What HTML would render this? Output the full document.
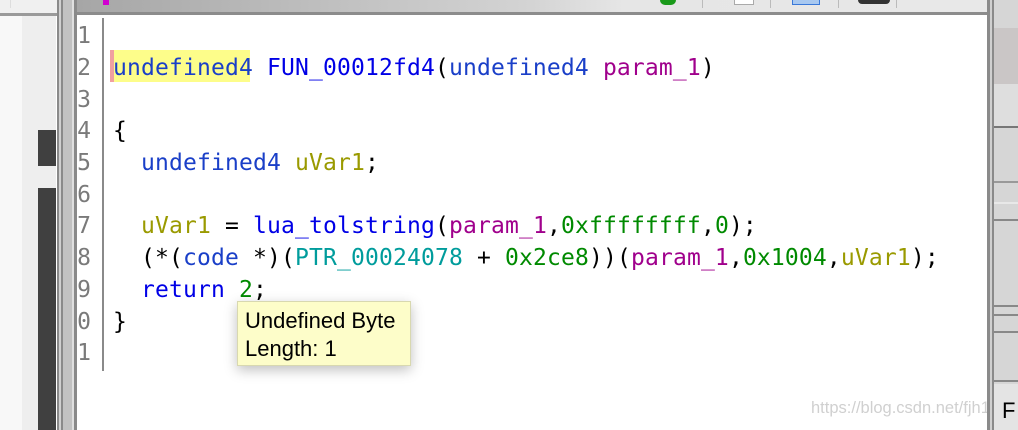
<!DOCTYPE html>
<html><head><meta charset="utf-8"><style>
*{margin:0;padding:0;box-sizing:border-box}
body{width:1018px;height:430px;overflow:hidden;background:#fff;position:relative;font-family:"DejaVu Sans Mono",monospace}
.a{position:absolute}
.code{position:absolute;left:113px;font-size:23px;letter-spacing:0.15px;white-space:pre;line-height:1;color:#000}
.ln{position:absolute;left:77px;font-size:23px;color:#7a7a7a;line-height:1;width:14px;overflow:hidden;direction:rtl;white-space:pre}
.t{color:#1a3fc8}.f{color:#0000e6}.p{color:#a0008c}.v{color:#9a9a00}.n{color:#008a00}.g{color:#009c9c}
</style></head><body>
<div class="a" style="left:0;top:0;width:57px;height:13px;background:#f0f0f0"></div>
<div class="a" style="left:10px;top:0;width:1px;height:8px;background:#ddd"></div>
<div class="a" style="left:0;top:13px;width:57px;height:3px;background:#9a9a9a"></div>
<div class="a" style="left:0;top:16px;width:22px;height:414px;background:#f8f8f8"></div>
<div class="a" style="left:22px;top:16px;width:34px;height:414px;background:#eeeeee"></div>
<div class="a" style="left:38px;top:130px;width:18px;height:36px;background:#404040"></div>
<div class="a" style="left:38px;top:188px;width:18px;height:242px;background:#404040"></div>
<div class="a" style="left:57px;top:0;width:2px;height:430px;background:#8a8a8a"></div>
<div class="a" style="left:59px;top:0;width:2px;height:430px;background:#d0d0d0"></div>
<div class="a" style="left:61px;top:0;width:2px;height:430px;background:#8a8a8a"></div>
<div class="a" style="left:63px;top:0;width:9px;height:430px;background:#c2c2c2"></div>
<div class="a" style="left:72px;top:0;width:2px;height:430px;background:#e0e0e0"></div>
<div class="a" style="left:74px;top:0;width:3px;height:430px;background:#8a8a8a"></div>
<div class="a" style="left:77px;top:0;width:911px;height:12px;background:linear-gradient(90deg,#a6a6a6,#d4d4d4 50%,#e6e6e6 60%,#e8e8e8)"></div>
<div class="a" style="left:77px;top:12px;width:911px;height:3px;background:#8c8c8c"></div>
<div class="a" style="left:103px;top:0;width:6px;height:5px;background:#d000d0"></div>
<div class="a" style="left:660px;top:0;width:16px;height:5px;border-radius:0 0 8px 8px;background:#1a9a1a"></div>
<div class="a" style="left:702px;top:0;width:1px;height:8px;background:#bbb"></div>
<div class="a" style="left:734px;top:0;width:20px;height:5px;background:#fff;border:1px solid #aaa;border-top:none"></div>
<div class="a" style="left:770px;top:0;width:1px;height:8px;background:#bbb"></div>
<div class="a" style="left:792px;top:0;width:28px;height:5px;background:#a8c8f0;border:1px solid #3a78d8;border-top:none"></div>
<div class="a" style="left:838px;top:0;width:1px;height:8px;background:#bbb"></div>
<div class="a" style="left:858px;top:0;width:32px;height:4px;border-radius:0 0 10px 10px;background:#333"></div>
<div class="a" style="left:896px;top:0;width:1px;height:8px;background:#bbb"></div>
<div class="a" style="left:102px;top:18px;width:2px;height:353px;background:#8a8a8a"></div>
<div class="ln" style="top:25px">1</div>
<div class="ln" style="top:57px">2</div>
<div class="ln" style="top:89px">3</div>
<div class="ln" style="top:120px">4</div>
<div class="ln" style="top:152px">5</div>
<div class="ln" style="top:184px">6</div>
<div class="ln" style="top:215px">7</div>
<div class="ln" style="top:247px">8</div>
<div class="ln" style="top:279px">9</div>
<div class="ln" style="top:311px">0</div>
<div class="ln" style="top:342px">1</div>
<div class="a" style="left:110px;top:50px;width:140px;height:32px;background:#fdfd8a"></div>
<div class="a" style="left:110px;top:50px;width:4px;height:32px;background:#f0a0a0"></div>
<div class="code" style="top:57px"><span class="t">undefined4</span> <span class="f">FUN_00012fd4</span>(<span class="t">undefined4</span> <span class="p">param_1</span>)</div>
<div class="code" style="top:120px">{</div>
<div class="code" style="top:152px">  <span class="t">undefined4</span> <span class="v">uVar1</span>;</div>
<div class="code" style="top:215px">  <span class="v">uVar1</span> = <span class="f">lua_tolstring</span>(<span class="p">param_1</span>,<span class="n">0xffffffff</span>,<span class="n">0</span>);</div>
<div class="code" style="top:247px">  (*(<span class="t">code</span> *)(<span class="g">PTR_00024078</span> + <span class="n">0x2ce8</span>))(<span class="p">param_1</span>,<span class="n">0x1004</span>,<span class="v">uVar1</span>);</div>
<div class="code" style="top:279px">  <span class="f">return</span> <span class="n">2</span>;</div>
<div class="code" style="top:311px">}</div>
<div class="a" style="left:237px;top:301px;width:174px;height:65px;background:#fdfdc9;border:1px solid #d8d8b0;box-shadow:0 4px 12px rgba(0,0,0,0.25);font-family:'Liberation Sans',sans-serif;font-size:22px;line-height:28px;padding:5px 0 0 7px;color:#000;white-space:nowrap">Undefined Byte<br>Length: 1</div>
<div class="a" style="left:811px;top:399px;font-family:'Liberation Sans',sans-serif;font-size:16.5px;color:#d0d0d0;white-space:nowrap">https://blog.csdn.net/fjh1997</div>
<div class="a" style="left:987px;top:0;width:3px;height:430px;background:#8a8a8a"></div>
<div class="a" style="left:990px;top:0;width:2px;height:430px;background:#d0d0d0"></div>
<div class="a" style="left:992px;top:0;width:2px;height:430px;background:#8a8a8a"></div>
<div class="a" style="left:994px;top:0;width:24px;height:430px;background:#d6d6d6"></div>
<div class="a" style="left:994px;top:28px;width:24px;height:56px;background:#cac6c6"></div>
<div class="a" style="left:994px;top:84px;width:24px;height:42px;background:#dedede"></div>
<div class="a" style="left:994px;top:126px;width:24px;height:2px;background:#777"></div>
<div class="a" style="left:994px;top:181px;width:24px;height:2px;background:#999"></div>
<div class="a" style="left:994px;top:202px;width:24px;height:2px;background:#e8e8e8"></div>
<div class="a" style="left:994px;top:219px;width:24px;height:2px;background:#888"></div>
<div class="a" style="left:994px;top:305px;width:24px;height:2px;background:#888"></div>
<div class="a" style="left:994px;top:314px;width:24px;height:2px;background:#888"></div>
<div class="a" style="left:994px;top:331px;width:24px;height:2px;background:#888"></div>
<div class="a" style="left:994px;top:380px;width:24px;height:2px;background:#888"></div>
<div class="a" style="left:994px;top:384px;width:24px;height:46px;background:#e4e4e4"></div>
<div class="a" style="left:1002px;top:398px;font-family:'Liberation Sans',sans-serif;font-size:22px;color:#000">F</div>
</body></html>
